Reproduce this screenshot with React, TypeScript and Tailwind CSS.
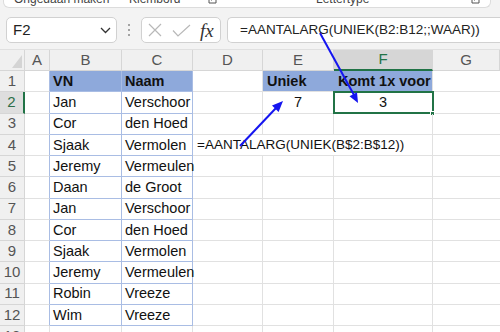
import React from 'react';

type Row = {
  b?: string;
  c?: string;
  d?: string;
  e?: string;
  f?: string;
};

const rows: Row[] = [
  { b: 'VN', c: 'Naam', e: 'Uniek', f: 'Komt 1x voor' },
  { b: 'Jan', c: 'Verschoor', e: '7', f: '3' },
  { b: 'Cor', c: 'den Hoed' },
  { b: 'Sjaak', c: 'Vermolen', d: '=AANTALARG(UNIEK(B$2:B$12))' },
  { b: 'Jeremy', c: 'Vermeulen' },
  { b: 'Daan', c: 'de Groot' },
  { b: 'Jan', c: 'Verschoor' },
  { b: 'Cor', c: 'den Hoed' },
  { b: 'Sjaak', c: 'Vermolen' },
  { b: 'Jeremy', c: 'Vermeulen' },
  { b: 'Robin', c: 'Vreeze' },
  { b: 'Wim', c: 'Vreeze' },
  {},
];

const columns = [
  { id: 'A', w: 'w-[25px]' },
  { id: 'B', w: 'w-[72px]' },
  { id: 'C', w: 'w-[71px]' },
  { id: 'D', w: 'w-[70px]' },
  { id: 'E', w: 'w-[71px]' },
  { id: 'F', w: 'w-[99px]' },
  { id: 'G', w: 'w-[67px]' },
];

function Launcher() {
  return (
    <svg width="9" height="9" viewBox="0 0 9 9" className="text-[#555]">
      <path d="M1 1v7h7V5" fill="none" stroke="currentColor" strokeWidth="1" />
      <path d="M3.5 5.5L8 1M8 1H5M8 1v3" fill="none" stroke="currentColor" strokeWidth="1" />
    </svg>
  );
}

function Ribbon() {
  return (
    <div className="h-[8px] w-[488px] ml-[3px] bg-white rounded-b-[6px] border-b border-x border-[#dcdcdc] overflow-hidden text-[12px] text-[#444]">
      <div className="flex items-start -mt-[7px] leading-[12px]">
        <span className="ml-[10px] w-[115px]">Ongedaan maken</span>
        <span className="w-[79px]">Klembord</span>
        <span className="mt-[2px] w-[108px]">
          <Launcher />
        </span>
        <span className="w-[155px]">Lettertype</span>
        <span className="mt-[2px]">
          <Launcher />
        </span>
      </div>
    </div>
  );
}

function FormulaBar() {
  return (
    <div className="flex items-center h-[26px] mt-[9px] mb-[6px]">
      <div className="ml-[6px] w-[111px] h-[26px] bg-white border border-[#d1d1d1] rounded-[5px] flex items-center pl-[6px] pr-[5px] text-[15px] text-[#222]">
        <span className="flex-1">F2</span>
        <svg width="11" height="7" viewBox="0 0 11 7">
          <path d="M1 1l4.5 4.5L10 1" fill="none" stroke="#333" strokeWidth="1.3" />
        </svg>
      </div>
      <div className="w-[24px] flex flex-col items-center gap-[3px]">
        <span className="w-[2px] h-[2px] bg-[#888] rounded-full" />
        <span className="w-[2px] h-[2px] bg-[#888] rounded-full" />
        <span className="w-[2px] h-[2px] bg-[#888] rounded-full" />
      </div>
      <div className="w-[80px] h-[26px] bg-white border border-[#d1d1d1] rounded-[5px] flex items-center pl-[6px]">
        <svg width="14" height="14" viewBox="0 0 14 14">
          <path d="M1 1l12 12M13 1L1 13" stroke="#b8b8b8" strokeWidth="1.2" />
        </svg>
        <svg width="19" height="13" viewBox="0 0 19 13" className="ml-[10px]">
          <path d="M1 6.5l5 5.5L18 1" fill="none" stroke="#b8b8b8" strokeWidth="1.2" />
        </svg>
        <span className="ml-[9px] font-['Liberation_Serif',serif] italic text-[19px] leading-none text-[#333]">
          fx
        </span>
      </div>
      <div className="ml-[6px] flex-1 h-[26px] bg-white border border-r-0 border-[#d1d1d1] rounded-l-[5px] flex items-center pl-[12px] text-[13.5px] text-[#222]">
        =AANTALARG(UNIEK(B2:B12;;WAAR))
      </div>
    </div>
  );
}

function ColumnHeaders() {
  return (
    <div className="flex h-[22px] bg-[#f0f0f0] border-t border-[#e0e0e0] text-[15px] text-[#555]">
      <div className="w-[25px] shrink-0 border-r border-b border-[#d6d6d6] flex items-end justify-end pr-[2px] pb-[2px]">
        <svg width="10" height="13" viewBox="0 0 10 13">
          <path d="M10 0v13H0z" fill="#d4d4d4" />
        </svg>
      </div>
      {columns.map((col) =>
        col.id === 'F' ? (
          <div
            key={col.id}
            className={`${col.w} shrink-0 bg-[#d6d6d6] border-r border-[#d6d6d6] border-b-2 border-b-[#217346] text-[#217346] flex items-center justify-center`}
          >
            {col.id}
          </div>
        ) : (
          <div
            key={col.id}
            className={`${col.w} shrink-0 border-r border-b border-[#d6d6d6] flex items-center justify-center`}
          >
            {col.id}
          </div>
        ),
      )}
    </div>
  );
}

function SheetRow({ row, n }: { row: Row; n: number }) {
  const inTable = n <= 12;
  const head = n === 1;
  const grid = 'border-[#e1e1e1]';
  const tbl = 'border-[#a9bde4]';
  return (
    <div className="flex h-[21.25px] text-[14.5px] text-[#111]">
      {n === 2 ? (
        <div className="w-[25px] shrink-0 bg-[#dedede] border-b border-[#d6d6d6] border-r-2 border-r-[#217346] text-[15px] text-[#2d6e48] flex items-center justify-center">
          {n}
        </div>
      ) : (
        <div className="w-[25px] shrink-0 bg-[#f0f0f0] border-r border-b border-[#d6d6d6] text-[15px] text-[#555] flex items-center justify-center">
          {n}
        </div>
      )}
      <div className={`w-[25px] shrink-0 border-r border-b ${grid} ${inTable ? 'border-r-[#a9bde4]' : ''}`} />
      <div
        className={`w-[72px] shrink-0 border-r border-b ${inTable ? tbl : grid} ${head ? 'bg-[#8ea9db] font-bold' : ''} flex items-center pl-[3px] pt-[1px] whitespace-nowrap`}
      >
        {row.b}
      </div>
      <div
        className={`w-[71px] shrink-0 border-r border-b ${inTable ? tbl : grid} ${head ? 'bg-[#8ea9db] font-bold' : ''} flex items-center pl-[3px] pt-[1px] whitespace-nowrap`}
      >
        {row.c}
      </div>
      <div
        className={`w-[70px] shrink-0 border-b ${row.d ? '' : 'border-r'} ${grid} flex items-center pl-[4px] pt-[1px] whitespace-nowrap text-[13.5px]`}
      >
        {row.d}
      </div>
      <div
        className={`w-[71px] shrink-0 border-b ${row.d ? '' : 'border-r'} ${head ? 'bg-[#8ea9db] font-bold border-[#8ea9db] border-b-[#e1e1e1] justify-start pl-[4px]' : `${grid} justify-center`} flex items-center pt-[1px] whitespace-nowrap`}
      >
        {row.e}
      </div>
      <div
        className={`relative w-[99px] shrink-0 border-r border-b ${head ? 'bg-[#8ea9db] font-bold border-b-[#e1e1e1] border-r-[#e1e1e1] justify-start pl-[4px]' : `${grid} justify-center`} flex items-center pt-[1px] whitespace-nowrap`}
      >
        {row.f}
        {n === 2 && (
          <>
            <div className="absolute -left-[1px] -top-[1px] w-[101px] h-[23px] border-2 border-[#217346]" />
            <div className="absolute -right-[3px] -bottom-[3px] w-[5px] h-[5px] bg-[#217346] border border-white" />
          </>
        )}
      </div>
      <div className={`w-[67px] shrink-0 border-b ${grid}`} />
    </div>
  );
}

export default function App() {
  return (
    <div className="relative w-[500px] h-[332px] overflow-hidden bg-[#f3f3f3] font-['Liberation_Sans',Arial,sans-serif]">
      <Ribbon />
      <FormulaBar />
      <ColumnHeaders />
      <div className="bg-white">
        {rows.map((row, i) => (
          <SheetRow key={i} row={row} n={i + 1} />
        ))}
      </div>

      {/* annotation arrows */}
      <svg className="absolute inset-0 pointer-events-none" width="500" height="332" viewBox="0 0 500 332">
        <line x1="320" y1="33" x2="354" y2="95" stroke="#1515f0" strokeWidth="2" />
        <polygon points="358,103 349.5,96.3 357,92.2" fill="#1515f0" />
        <line x1="240" y1="146" x2="276" y2="108" stroke="#1515f0" strokeWidth="2" />
        <polygon points="283,101 278.6,112 272,105.6" fill="#1515f0" />
      </svg>
    </div>
  );
}
